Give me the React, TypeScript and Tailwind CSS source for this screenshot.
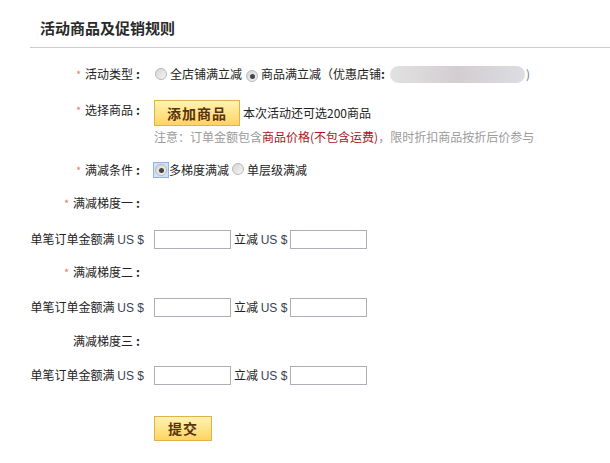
import React from "react";

function Radio({ checked, focus }: { checked?: boolean; focus?: boolean }) {
  return (
    <span
      className={`inline-flex items-center justify-center w-[14px] h-[14px] ${
        focus ? "bg-[#cfe0f7] outline outline-1 outline-[#8fb4e8]" : ""
      }`}
    >
      <span className="w-[12px] h-[12px] rounded-full border border-[#b8b8b8] bg-gradient-to-br from-[#d6d6d6] to-[#f4f4f4] flex items-center justify-center">
        {checked && <span className="w-[5px] h-[5px] rounded-full bg-[#444]" />}
      </span>
    </span>
  );
}

function Label({ text, required }: { text: string; required?: boolean }) {
  return (
    <div className="w-[140px] shrink-0 flex justify-end items-center">
      {required && <span className="text-[#e0806e] text-[11px] mr-[4px]">*</span>}
      <span>{text}</span>
      <span className="font-bold ml-[3px]">:</span>
    </div>
  );
}

function Input() {
  return <div className="w-[77px] h-[19px] border border-[#aab0b6] bg-white" />;
}

function AmountRow({ className }: { className: string }) {
  return (
    <div className={`flex items-center h-[20px] ${className}`}>
      <div className="w-[144px] shrink-0 text-right">
        单笔订单金额满 <span className="font-['Liberation_Sans',sans-serif] text-[#3a3f55]">US $</span>
      </div>
      <div className="ml-[10px] flex items-center">
        <Input />
        <span className="ml-[3px] mr-[3px]">
          立减 <span className="font-['Liberation_Sans',sans-serif] text-[#3a3f55]">US $</span>
        </span>
        <Input />
      </div>
    </div>
  );
}

export default function App() {
  return (
    <div className="w-[610px] h-[463px] bg-white text-[12px] text-[#222] font-['Noto_Sans_CJK_SC',sans-serif] overflow-hidden">
      <div className="h-[47px] pt-[19px] pl-[40px] text-[15px] leading-[18px] font-bold text-[#2a2a2a]">
        活动商品及促销规则
      </div>
      <div className="ml-[30px] border-b border-[#cccccc]" />

      <div className="flex items-center h-[28px] mt-[12px]">
        <Label text="活动类型" required />
        <div className="ml-[14px] flex items-center">
          <Radio />
          <span className="ml-[2px]">全店铺满立减</span>
          <span className="ml-[3px]"><Radio checked /></span>
          <span className="ml-[2px]">商品满立减（优惠店铺<span className="font-bold">:</span></span>
          <span className="ml-[5px] w-[135px] h-[17px] rounded-full bg-gradient-to-r from-[#e2e2e2] via-[#d3cdd1] to-[#dcdde2] blur-[0.5px]" />
          <span className="ml-[1px] text-[#777]">)</span>
        </div>
      </div>

      <div className="flex items-center h-[26px] mt-[12px]">
        <div className="w-[140px] shrink-0 flex justify-end items-center self-start pt-[1px]">
          <span className="text-[#e0806e] text-[11px] mr-[4px]">*</span>
          <span>选择商品</span>
          <span className="font-bold ml-[3px]">:</span>
        </div>
        <div className="ml-[14px] flex items-center">
          <button className="w-[86px] h-[26px] border border-[#e2b24a] bg-gradient-to-b from-[#fff3b0] to-[#fcd560] text-[14px] font-bold text-[#5a3210] tracking-[1px]">
            添加商品
          </button>
          <span className="ml-[3px]">本次活动还可选200商品</span>
        </div>
      </div>

      <div className="ml-[154px] mt-[3px] leading-[16px] text-[#9a9a9a]">
        注意：订单金额包含<span className="text-[#a8141c]">商品价格(不包含运费)</span>，限时折扣商品按折后价参与
      </div>

      <div className="flex items-center h-[20px] mt-[15px]">
        <Label text="满减条件" required />
        <div className="ml-[14px] flex items-center">
          <Radio checked focus />
          <span className="ml-[1px]">多梯度满减</span>
          <span className="ml-[2px]"><Radio /></span>
          <span className="ml-[2px]">单层级满减</span>
        </div>
      </div>

      <div className="flex items-center h-[20px] mt-[13px]">
        <Label text="满减梯度一" required />
      </div>
      <AmountRow className="mt-[16px]" />

      <div className="flex items-center h-[20px] mt-[13px]">
        <Label text="满减梯度二" required />
      </div>
      <AmountRow className="mt-[15px]" />

      <div className="flex items-center h-[20px] mt-[14px]">
        <Label text="满减梯度三" />
      </div>
      <AmountRow className="mt-[14px]" />

      <div className="ml-[154px] mt-[31px]">
        <button className="w-[58px] h-[25px] border border-[#e2b24a] bg-gradient-to-b from-[#fff3b0] to-[#fcd560] text-[14px] font-bold text-[#5a3210] tracking-[1px]">
          提交
        </button>
      </div>
    </div>
  );
}
